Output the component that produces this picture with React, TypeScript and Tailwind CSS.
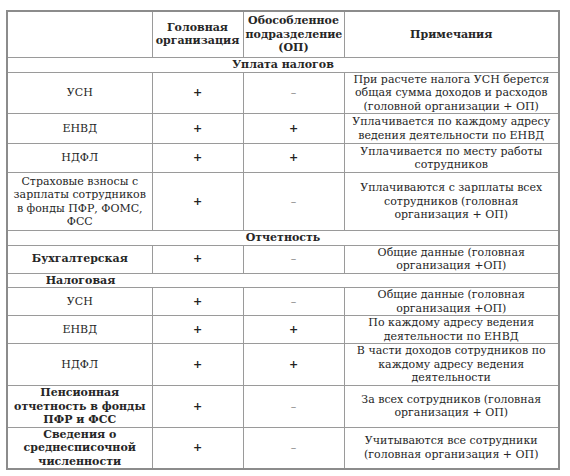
import React from "react";

type Row =
  | { kind: "section"; text: string; h: number; align?: "center" | "col1" }
  | { kind: "data"; name: string; bold?: boolean; head: string; op: string; note: string; h: number };

const ROWS: Row[] = [
  { kind: "section", text: "Уплата налогов", h: 15 },
  { kind: "data", name: "УСН", head: "+", op: "–", note: "При расчете налога УСН берется общая сумма доходов и расходов (головной организации + ОП)", h: 41 },
  { kind: "data", name: "ЕНВД", head: "+", op: "+", note: "Уплачивается по каждому адресу ведения деятельности по ЕНВД", h: 30 },
  { kind: "data", name: "НДФЛ", head: "+", op: "+", note: "Уплачивается по месту работы сотрудников", h: 29 },
  { kind: "data", name: "Страховые взносы с зарплаты сотрудников в фонды ПФР, ФОМС, ФСС", head: "+", op: "–", note: "Уплачиваются с зарплаты всех сотрудников (головная организация + ОП)", h: 58 },
  { kind: "section", text: "Отчетность", h: 13 },
  { kind: "data", name: "Бухгалтерская", bold: true, head: "+", op: "–", note: "Общие данные (головная организация +ОП)", h: 28 },
  { kind: "section", text: "Налоговая", h: 14, align: "col1" },
  { kind: "data", name: "УСН", head: "+", op: "–", note: "Общие данные (головная организация +ОП)", h: 28 },
  { kind: "data", name: "ЕНВД", head: "+", op: "+", note: "По каждому адресу ведения деятельности по ЕНВД", h: 28 },
  { kind: "data", name: "НДФЛ", head: "+", op: "+", note: "В части доходов сотрудников по каждому адресу ведения деятельности", h: 42 },
  { kind: "data", name: "Пенсионная отчетность в фонды ПФР и ФСС", bold: true, head: "+", op: "–", note: "За всех сотрудников (головная организация + ОП)", h: 41 },
  { kind: "data", name: "Сведения о среднесписочной численности", bold: true, head: "+", op: "–", note: "Учитываются все сотрудники (головная организация + ОП)", h: 41 },
];

const cell = "border border-[#9a9a9a] text-center align-middle p-0 px-[2px]";

function Mark({ v }: { v: string }) {
  return v === "+" ? (
    <span className="font-bold text-[#222]">+</span>
  ) : (
    <span className="text-[#888]">–</span>
  );
}

export default function App() {
  return (
    <div className="w-[570px] h-[476px] bg-white pt-[10px] pl-[6px] font-['DejaVu_Serif',serif] text-[11px] leading-[13.5px] text-[#262626]">
      <table className="border-collapse table-fixed w-[552px] border-2 border-[#8c8c8c]">
        <colgroup>
          <col className="w-[145px]" />
          <col className="w-[91px]" />
          <col className="w-[101px]" />
          <col className="w-[215px]" />
        </colgroup>
        <thead>
          <tr className="h-[46px] font-bold">
            <th className={cell}></th>
            <th className={cell}>Головная организация</th>
            <th className={cell}>Обособленное подразделение (ОП)</th>
            <th className={cell}>Примечания</th>
          </tr>
        </thead>
        <tbody>
          {ROWS.map((r, i) =>
            r.kind === "section" ? (
              <tr key={i} style={{ height: r.h }}>
                <td colSpan={4} className="border border-[#9a9a9a] p-0 font-bold align-middle">
                  {r.align === "col1" ? (
                    <div className="w-[145px] text-center">{r.text}</div>
                  ) : (
                    <div className="text-center">{r.text}</div>
                  )}
                </td>
              </tr>
            ) : (
              <tr key={i} style={{ height: r.h }}>
                <td className={`${cell} ${r.bold ? "font-bold" : ""}`}>{r.name}</td>
                <td className={cell}><Mark v={r.head} /></td>
                <td className={cell}><Mark v={r.op} /></td>
                <td className={cell}>{r.note}</td>
              </tr>
            )
          )}
        </tbody>
      </table>
    </div>
  );
}
